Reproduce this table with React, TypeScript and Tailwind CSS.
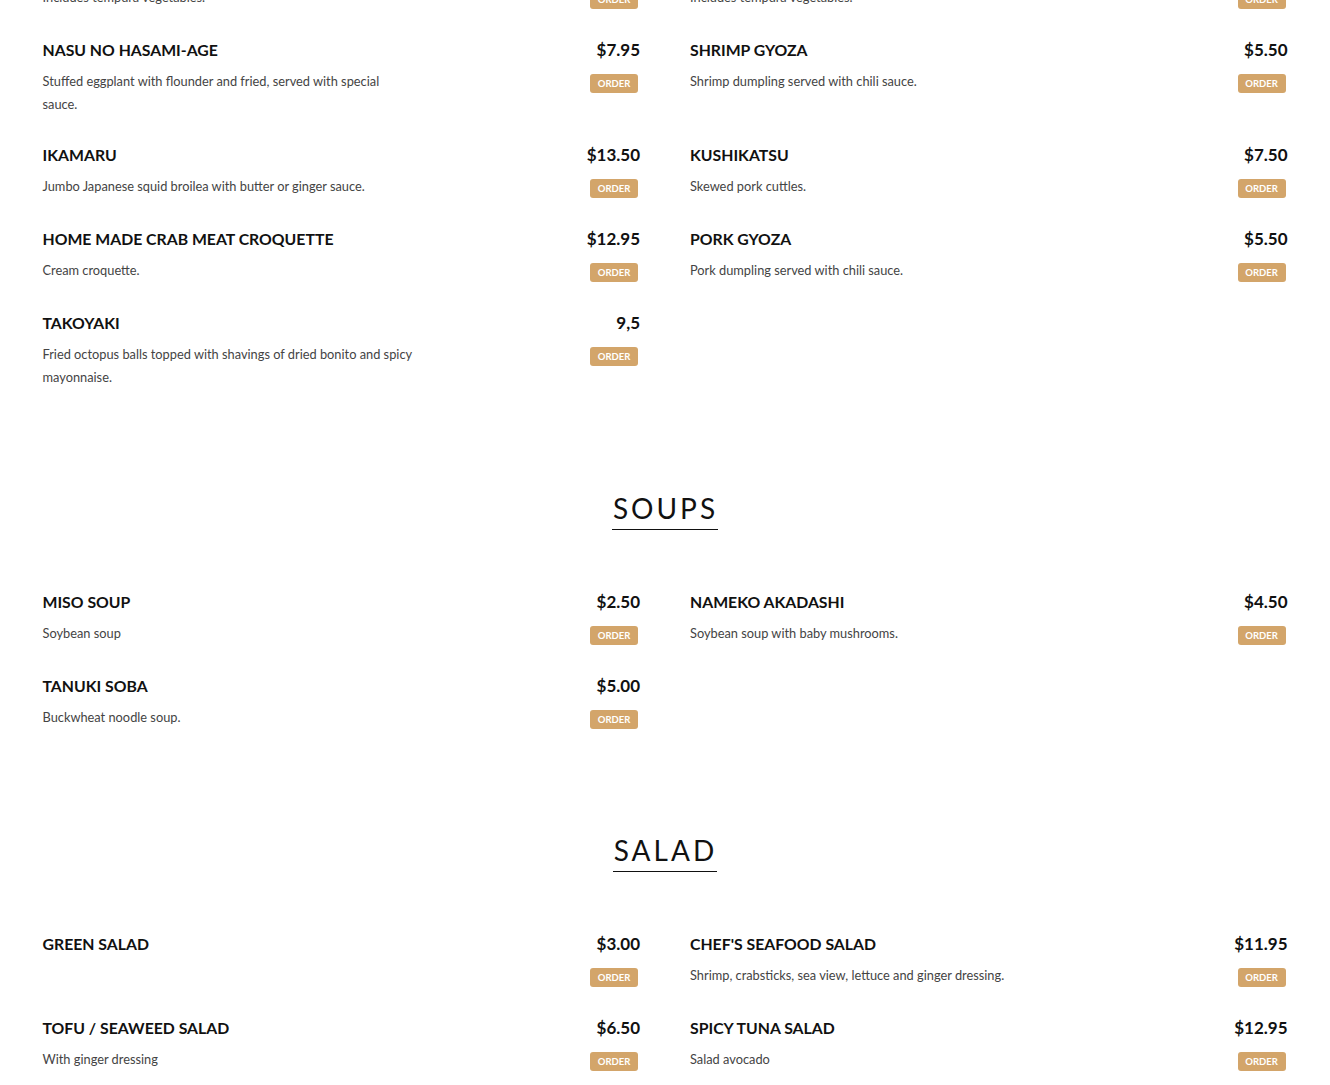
import React from 'react';

type Item = { name: string; price: string; desc?: string };

const previous: Item[] = [
  { name: 'VEGETABLE TEMPURA', price: '$9.95', desc: 'Includes tempura vegetables.' },
  { name: 'SHRIMP TEMPURA', price: '$11.95', desc: 'Includes tempura vegetables.' },
];

const appetizers: Item[] = [
  { name: 'NASU NO HASAMI-AGE', price: '$7.95', desc: 'Stuffed eggplant with flounder and fried, served with special sauce.' },
  { name: 'SHRIMP GYOZA', price: '$5.50', desc: 'Shrimp dumpling served with chili sauce.' },
  { name: 'IKAMARU', price: '$13.50', desc: 'Jumbo Japanese squid broilea with butter or ginger sauce.' },
  { name: 'KUSHIKATSU', price: '$7.50', desc: 'Skewed pork cuttles.' },
  { name: 'HOME MADE CRAB MEAT CROQUETTE', price: '$12.95', desc: 'Cream croquette.' },
  { name: 'PORK GYOZA', price: '$5.50', desc: 'Pork dumpling served with chili sauce.' },
  { name: 'TAKOYAKI', price: '9,5', desc: 'Fried octopus balls topped with shavings of dried bonito and spicy mayonnaise.' },
];

const soups: Item[] = [
  { name: 'MISO SOUP', price: '$2.50', desc: 'Soybean soup' },
  { name: 'NAMEKO AKADASHI', price: '$4.50', desc: 'Soybean soup with baby mushrooms.' },
  { name: 'TANUKI SOBA', price: '$5.00', desc: 'Buckwheat noodle soup.' },
];

const salads: Item[] = [
  { name: 'GREEN SALAD', price: '$3.00' },
  { name: "CHEF'S SEAFOOD SALAD", price: '$11.95', desc: 'Shrimp, crabsticks, sea view, lettuce and ginger dressing.' },
  { name: 'TOFU / SEAWEED SALAD', price: '$6.50', desc: 'With ginger dressing' },
  { name: 'SPICY TUNA SALAD', price: '$12.95', desc: 'Salad avocado' },
  { name: 'SEAWEED SALAD', price: '$5.50', desc: 'Marinated seaweed.' },
  { name: 'AVOCADO SALAD', price: '$6.95', desc: 'With ginger dressing' },
];

function MenuItem({ item }: { item: Item }) {
  return (
    <div className="flex justify-between min-h-[55px]">
      <div className="w-[372px]">
        <h3 className="text-[15.8px] leading-[20px] font-bold text-[#111]">{item.name}</h3>
        {item.desc && (
          <p className="mt-[10px] text-[12.8px] leading-[23px] text-[#444]">{item.desc}</p>
        )}
      </div>
      <div className="flex flex-col items-end">
        <span className="text-[17px] leading-[20px] font-bold text-[#111]">{item.price}</span>
        <button className="mt-[14px] mr-[2px] w-[48px] h-[19px] rounded-[3px] bg-[#d3a56a] text-white text-[9.5px] font-bold leading-[19px]">
          ORDER
        </button>
      </div>
    </div>
  );
}

function Grid({ items }: { items: Item[] }) {
  return (
    <div className="grid grid-cols-2 gap-x-[50px] gap-y-[29px]">
      {items.map(it => <MenuItem key={it.name} item={it} />)}
    </div>
  );
}

function SectionTitle({ title }: { title: string }) {
  return (
    <div className="mt-[102px] mb-[62px] flex justify-center">
      <h2 className="text-[28px] leading-[35px] tracking-[3px] font-normal text-[#111] pb-[3px] border-b border-[#111] pl-[1px]">
        {title}
      </h2>
    </div>
  );
}

export default function App() {
  return (
    <div className="h-[1085px] overflow-hidden bg-white" style={{ fontFamily: 'Lato, "Open Sans", sans-serif' }}>
      <div className="w-[1245px] mx-auto -mt-[44px]">
        {/* the row cut off at the top of the viewport */}
        <div className="mb-[29px]">
          <Grid items={previous} />
        </div>
        <Grid items={appetizers} />

        <SectionTitle title="SOUPS" />
        <Grid items={soups} />

        <SectionTitle title="SALAD" />
        <Grid items={salads} />
      </div>
    </div>
  );
}
